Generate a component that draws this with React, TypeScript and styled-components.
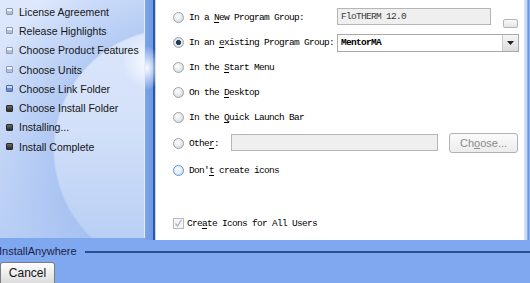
import styled, { createGlobalStyle } from 'styled-components';

const GlobalStyle = createGlobalStyle`
  html, body { margin: 0; padding: 0; background: #80a8f0; }
  body { font-family: "Liberation Sans", Arial, sans-serif; }
`;

const steps = [
  { label: 'License Agreement', state: 'done' },
  { label: 'Release Highlights', state: 'done' },
  { label: 'Choose Product Features', state: 'done' },
  { label: 'Choose Units', state: 'done' },
  { label: 'Choose Link Folder', state: 'current' },
  { label: 'Choose Install Folder', state: 'todo' },
  { label: 'Installing...', state: 'todo' },
  { label: 'Install Complete', state: 'todo' },
];

const Underline = ({ text, at }: { text: string; at: number }) => (
  <>
    {text.slice(0, at)}
    <u>{text[at]}</u>
    {text.slice(at + 1)}
  </>
);

const App = () => {
  return (
    <Window>
      <GlobalStyle />
      <Main>
        <SidePanel>
          {steps.map((s) => (
            <Step key={s.label}>
              <StepIcon state={s.state} />
              {s.label}
            </Step>
          ))}
        </SidePanel>
        <Strip />
        <Content>
          <Row h={25}>
            <Radio />
            <Label w={148}>
              <Underline text="In a New Program Group:" at={5} />
            </Label>
            <Field w={154} disabled>FloTHERM 12.0</Field>
            <Spacer />
            <TinyButton />
          </Row>
          <Row h={25}>
            <Radio checked />
            <Label w={148}>
              <Underline text="In an existing Program Group:" at={6} />
            </Label>
            <Combo>
              <ComboText>MentorMA</ComboText>
              <ComboArrow>
                <svg width="7" height="4" viewBox="0 0 7 4">
                  <path d="M0 0h7L3.5 4z" fill="#222" />
                </svg>
              </ComboArrow>
            </Combo>
          </Row>
          <Row h={25}>
            <Radio />
            <Label>
              <Underline text="In the Start Menu" at={7} />
            </Label>
          </Row>
          <Row h={25}>
            <Radio />
            <Label>
              <Underline text="On the Desktop" at={7} />
            </Label>
          </Row>
          <Row h={25}>
            <Radio />
            <Label>
              <Underline text="In the Quick Launch Bar" at={7} />
            </Label>
          </Row>
          <Row h={26}>
            <Radio />
            <Label w={42}>
              <Underline text="Other:" at={4} />
            </Label>
            <Field w={207} disabled />
            <ChooseButton>
              Ch<u>o</u>ose...
            </ChooseButton>
          </Row>
          <Row h={29}>
            <Radio focused />
            <Label>
              <Underline text="Don't create icons" at={4} />
            </Label>
          </Row>
          <Filler />
          <Row h={24}>
            <CheckBox>
              <svg width="9" height="9" viewBox="0 0 9 9">
                <path d="M1.5 4.5l2 2.5 4-6" fill="none" stroke="#a8b4c0" strokeWidth="1.3" />
              </svg>
            </CheckBox>
            <Label>
              <Underline text="Create Icons for All Users" at={3} />
            </Label>
          </Row>
        </Content>
        <RightEdge />
      </Main>
      <Footer>
        <Brand>
          <BrandText>InstallAnywhere</BrandText>
          <BrandLine />
        </Brand>
        <CancelButton>Cancel</CancelButton>
      </Footer>
    </Window>
  );
};

const Window = styled.div`
  width: 530px;
  height: 283px;
  overflow: hidden;
  display: flex;
  flex-direction: column;
  background: #80a8f0;
`;

const Main = styled.div`
  display: grid;
  grid-template-columns: 145px 11px 368px 6px;
  height: 240px;
`;

const SidePanel = styled.div`
  display: flex;
  flex-direction: column;
  padding: 2px 0 0 5px;
  height: 238px;
  box-sizing: border-box;
  overflow: hidden;
  border-right: 1px solid #e4ecfc;
  background:
    radial-gradient(circle at 150px 62px, rgba(255,255,255,0.95) 0, rgba(255,255,255,0) 28px),
    radial-gradient(circle at 175px 150px, rgba(150,182,238,0) 0, rgba(150,182,238,0) 120px, rgba(150,182,238,0.55) 122px, rgba(170,196,242,0.35) 170px, rgba(200,218,248,0) 200px),
    linear-gradient(180deg, #dde8fc 0%, #d2e0f9 55%, #b9cff5 100%);
`;

const Step = styled.div`
  display: flex;
  align-items: center;
  height: 19.3px;
  font-size: 10.5px;
  color: #161616;
  white-space: nowrap;
`;

const StepIcon = styled.span<{ state: string }>`
  width: 7px;
  height: 7px;
  flex-shrink: 0;
  margin: 0 6px 0 1px;
  border-radius: 1px;
  box-sizing: border-box;
  border: 1px solid ${(p) => (p.state === 'todo' ? '#2a2a2a' : p.state === 'current' ? '#4a6aa8' : '#8a98b8')};
  background: ${(p) =>
    p.state === 'todo'
      ? 'linear-gradient(#6a6a6a, #2c2c2c)'
      : p.state === 'current'
      ? 'linear-gradient(#c8d8f8 35%, #6c8ccc 40%)'
      : 'linear-gradient(#f4f6fb 35%, #b4c0d8 40%)'};
`;

const Strip = styled.div`
  height: 240px;
  background:
    radial-gradient(ellipse 14px 22px at 2px 68px, rgba(255,255,255,0.95), rgba(255,255,255,0)),
    linear-gradient(90deg, #7ca4ec 0, #6e98e4 8px, #2c5aa4 8px, #2c5aa4 10px, #c0d2f2 10px);
`;

const Content = styled.div`
  background: #fff;
  display: flex;
  flex-direction: column;
  padding: 5px 0 5px 17px;
  box-sizing: border-box;
  font-family: "Liberation Mono", "DejaVu Sans Mono", monospace;
  font-size: 9.5px;
  letter-spacing: -0.7px;
  color: #000;
`;

const Row = styled.div<{ h: number }>`
  display: flex;
  align-items: center;
  height: ${(p) => p.h}px;
  flex-shrink: 0;
`;

const Filler = styled.div`
  flex: 1;
`;

const Spacer = styled.div`
  flex: 1;
`;

const Radio = styled.span<{ checked?: boolean; focused?: boolean }>`
  width: 11px;
  height: 11px;
  border-radius: 50%;
  box-sizing: border-box;
  flex-shrink: 0;
  margin-right: 5px;
  border: 1px solid ${(p) => (p.focused ? '#5e96d6' : '#9ca3ab')};
  background: ${(p) =>
    p.checked
      ? 'radial-gradient(circle, #1e3f5c 0, #1e3f5c 2.4px, #e6eaee 2.8px, #c9cfd6 100%)'
      : p.focused
      ? 'radial-gradient(circle at 40% 35%, #ffffff 0, #dde9f6 60%, #b8cfe8 100%)'
      : 'radial-gradient(circle at 40% 35%, #ffffff 0, #e2e5e8 60%, #c4c8cd 100%)'};
`;

const Label = styled.span<{ w?: number }>`
  white-space: nowrap;
  ${(p) => (p.w ? `width: ${p.w}px;` : '')}
  u { text-underline-offset: 2px; }
`;

const Field = styled.div<{ w: number; disabled?: boolean }>`
  width: ${(p) => p.w}px;
  height: 17px;
  box-sizing: border-box;
  border: 1px solid #b5b5b5;
  background: ${(p) => (p.disabled ? '#efefef' : '#fff')};
  padding: 0 3px;
  display: flex;
  align-items: center;
  color: #3a3a3a;
  margin-top: -2px;
`;

const TinyButton = styled.div`
  width: 13px;
  height: 7px;
  margin: 12px 6px 0 0;
  border: 1px solid #b4b4b4;
  border-radius: 2px;
  background: linear-gradient(#fafafa, #e4e4e4);
`;

const Combo = styled.div`
  width: 182px;
  height: 18px;
  box-sizing: border-box;
  border: 1px solid #a9a9a9;
  background: #fff;
  display: flex;
  align-items: stretch;
`;

const ComboText = styled.span`
  flex: 1;
  padding-left: 3px;
  display: flex;
  align-items: center;
  font-weight: bold;
`;

const ComboArrow = styled.span`
  width: 15px;
  display: flex;
  align-items: center;
  justify-content: center;
  border-left: 1px solid #c8c8c8;
  background: linear-gradient(#f6f6f6, #dcdcdc);
`;

const ChooseButton = styled.div`
  width: 69px;
  height: 20px;
  margin-left: 11px;
  box-sizing: border-box;
  border: 1px solid #b2b2b2;
  border-radius: 3px;
  background: linear-gradient(#fbfbfb, #ececec);
  display: flex;
  align-items: center;
  justify-content: center;
  font-family: "Liberation Sans", Arial, sans-serif;
  font-size: 11px;
  letter-spacing: 0;
  color: #8a8a8a;
`;

const CheckBox = styled.span`
  width: 11px;
  height: 11px;
  box-sizing: border-box;
  border: 1px solid #b8bcc2;
  background: #f4f5f6;
  margin-right: 3px;
  display: flex;
  align-items: center;
  justify-content: center;
`;

const RightEdge = styled.div`
  height: 240px;
  background: linear-gradient(90deg, #d8e4f8 0, #c2d4f4 3px, #5b8ad8 4px, #9cbcf2 6px);
`;

const Footer = styled.div`
  flex: 1;
  display: flex;
  flex-direction: column;
  background: #80a8f0;
`;

const Brand = styled.div`
  display: flex;
  align-items: center;
  height: 22px;
`;

const BrandText = styled.span`
  font-size: 11px;
  color: #1a2446;
  margin-left: -1px;
  padding-right: 8px;
`;

const BrandLine = styled.div`
  flex: 1;
  height: 2px;
  background: #23508e;
  margin-top: 1px;
`;

const CancelButton = styled.div`
  width: 55px;
  height: 24px;
  box-sizing: border-box;
  border: 1px solid #7c7c7c;
  border-radius: 3px;
  background: linear-gradient(#ffffff, #e8e8e8 60%, #d8d8d8);
  display: flex;
  align-items: center;
  justify-content: center;
  padding-bottom: 3px;
  font-size: 12px;
  color: #111;
`;

export default App;
